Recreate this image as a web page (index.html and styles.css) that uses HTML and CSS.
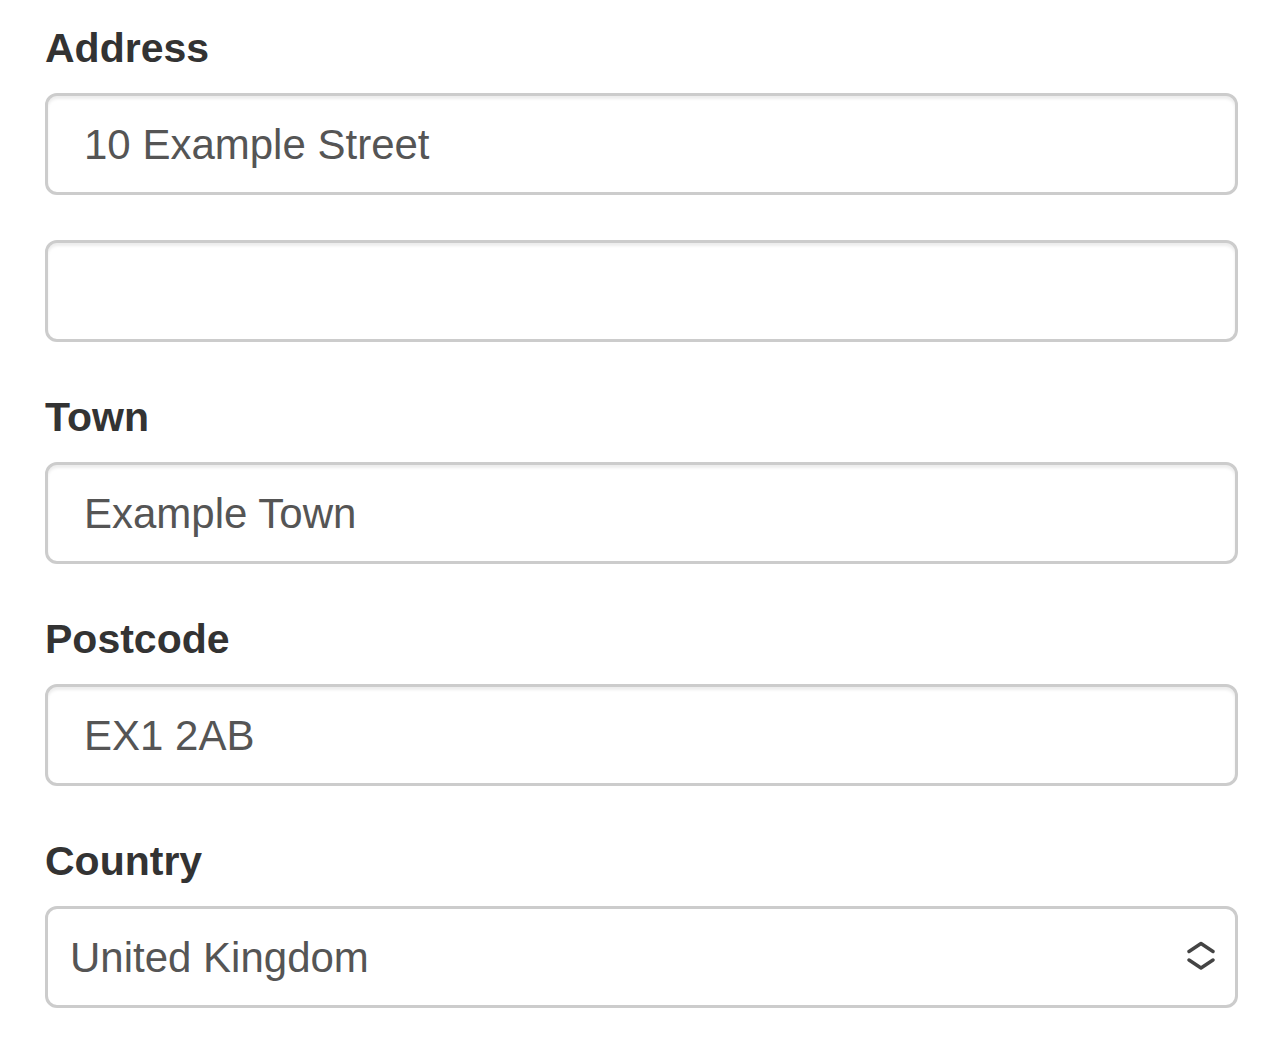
FILE: index.html
```html
<!DOCTYPE html>
<html lang="en">
<head>
<meta charset="utf-8">
<title>Address form</title>
<link rel="stylesheet" href="styles.css">
</head>
<body>
<form class="form">
  <div class="form-group">
    <label class="label" for="addr1">Address</label>
    <input class="control" id="addr1" type="text" value="10 Example Street">
  </div>
  <div class="form-group">
    <input class="control" id="addr2" type="text" value="">
  </div>
  <div class="form-group">
    <label class="label" for="town">Town</label>
    <input class="control" id="town" type="text" value="Example Town">
  </div>
  <div class="form-group">
    <label class="label" for="postcode">Postcode</label>
    <input class="control" id="postcode" type="text" value="EX1 2AB">
  </div>
  <div class="form-group">
    <label class="label" for="country">Country</label>
    <div class="select-wrap">
      <select class="control select" id="country">
        <option selected>United Kingdom</option>
        <option>France</option>
        <option>Germany</option>
      </select>
      <svg class="select-icon" width="28" height="30" viewBox="0 0 28 30" aria-hidden="true">
        <path d="M2 10.5 L14 2.5 L26 10.5" fill="none" stroke="#444" stroke-width="3.4" stroke-linecap="round" stroke-linejoin="round"/>
        <path d="M2 19 L14 27 L26 19" fill="none" stroke="#444" stroke-width="3.4" stroke-linecap="round" stroke-linejoin="round"/>
      </svg>
    </div>
  </div>
</form>
</body>
</html>
```

FILE: styles.css
```css
html, body {
  margin: 0;
  padding: 0;
  background: #fff;
}

body {
  font-family: "Liberation Sans", Arial, Helvetica, sans-serif;
  font-size: 42px;
  line-height: 60px;
  color: #333;
}

.form {
  padding: 18px 45px 0 45px;
}

.form-group {
  margin-bottom: 45px;
}

.label {
  display: block;
  font-size: 41px;
  font-weight: bold;
  color: #333;
  margin-bottom: 15px;
  line-height: 60px;
}

.control {
  display: block;
  box-sizing: border-box;
  width: 100%;
  height: 102px;
  margin: 0;
  padding: 19px 36px 17px 36px;
  font-family: inherit;
  font-size: 42px;
  line-height: 60px;
  color: #555;
  background: #fff;
  border: 3px solid #ccc;
  border-radius: 12px;
  box-shadow: inset 0 3px 3px rgba(0, 0, 0, 0.075);
  outline: none;
}

.select-wrap {
  position: relative;
}

.select {
  -webkit-appearance: none;
  appearance: none;
  padding-left: 22px;
  padding-right: 80px;
  box-shadow: none;
}

.select-icon {
  position: absolute;
  right: 23px;
  top: 35px;
  pointer-events: none;
}
```
